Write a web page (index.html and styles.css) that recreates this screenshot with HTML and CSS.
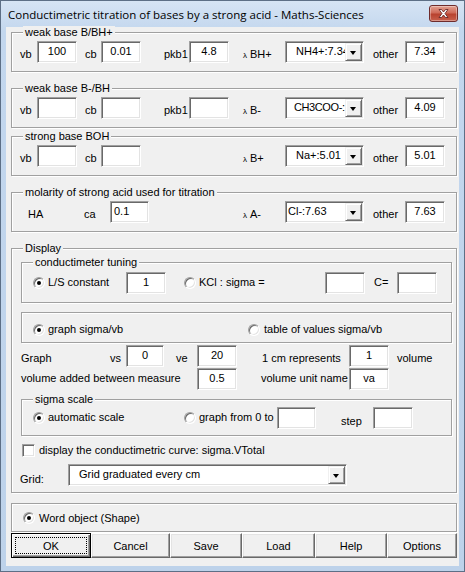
FILE: index.html
```html
<!DOCTYPE html>
<html>
<head>
<meta charset="utf-8">
<title>Conductimetric titration</title>
<link rel="stylesheet" href="styles.css">
</head>
<body>
<div class="window">
  <div class="titlebar">
    <span class="title">Conductimetric titration of bases by a strong acid - Maths-Sciences</span>
    <span class="close"><svg width="29" height="17" viewBox="0 0 29 17"><path d="M10 4.5 L12.5 4.5 L14.5 7 L16.5 4.5 L19 4.5 L16 8.5 L19 12.5 L16.5 12.5 L14.5 10 L12.5 12.5 L10 12.5 L13 8.5 Z" fill="#fff" stroke="#5a1a1a" stroke-width="0.8"/></svg></span>
  </div>
  <div class="client">

    <div class="group g1">
      <span class="legend">weak base B/BH+</span>
      <div class="row">
        <span class="lbl l-vb">vb</span><span class="edit">100</span>
        <span class="lbl l-cb">cb</span><span class="edit">0.01</span>
        <span class="lbl l-pkb">pkb1</span><span class="edit">4.8</span>
        <span class="lbl l-lam"><span class="lam">λ</span>BH+</span>
        <span class="combo"><span class="ctext">NH4+:7.34</span><span class="cbtn"></span></span>
        <span class="lbl l-other">other</span><span class="edit">7.34</span>
      </div>
    </div>

    <div class="group g2">
      <span class="legend">weak base B-/BH</span>
      <div class="row">
        <span class="lbl l-vb">vb</span><span class="edit"></span>
        <span class="lbl l-cb">cb</span><span class="edit"></span>
        <span class="lbl l-pkb">pkb1</span><span class="edit"></span>
        <span class="lbl l-lam"><span class="lam">λ</span>B-</span>
        <span class="combo"><span class="ctext narrow">CH3COO-:</span><span class="cbtn"></span></span>
        <span class="lbl l-other">other</span><span class="edit">4.09</span>
      </div>
    </div>

    <div class="group g3">
      <span class="legend">strong base BOH</span>
      <div class="row">
        <span class="lbl l-vb">vb</span><span class="edit"></span>
        <span class="lbl l-cb">cb</span><span class="edit"></span>
        <span class="lbl l-lam2"><span class="lam">λ</span>B+</span>
        <span class="combo"><span class="ctext">Na+:5.01</span><span class="cbtn"></span></span>
        <span class="lbl l-other">other</span><span class="edit">5.01</span>
      </div>
    </div>

    <div class="group g4">
      <span class="legend">molarity of strong acid used for titration</span>
      <div class="row">
        <span class="lbl l-ha">HA</span><span class="lbl l-ca">ca</span><span class="edit e-ca">0.1</span>
        <span class="lbl l-lam3"><span class="lam">λ</span>A-</span>
        <span class="combo"><span class="ctext c-cl">Cl-:7.63</span><span class="cbtn"></span></span>
        <span class="lbl l-other">other</span><span class="edit">7.63</span>
      </div>
    </div>

    <div class="group display">
      <span class="legend">Display</span>

      <div class="group sub tuning">
        <span class="legend">conductimeter tuning</span>
        <div class="row">
          <span class="radio on r-first"></span><span class="lbl l-ls">L/S constant</span><span class="edit">1</span>
          <span class="radio r-kcl"></span><span class="lbl l-kcl">KCl : sigma =</span><span class="edit"></span>
          <span class="lbl l-c">C=</span><span class="edit"></span>
        </div>
      </div>

      <div class="group sub mode">
        <div class="row">
          <span class="radio on r-first"></span><span class="lbl l-graph">graph sigma/vb</span>
          <span class="radio"></span><span class="lbl l-table">table of values sigma/vb</span>
        </div>
      </div>

      <div class="row line1">
        <span class="lbl l-graphw">Graph</span><span class="lbl l-vs">vs</span><span class="edit e-vs">0</span>
        <span class="lbl l-ve">ve</span><span class="edit e-20">20</span>
        <span class="lbl l-cm">1 cm represents</span><span class="edit e-1">1</span>
        <span class="lbl l-vol">volume</span>
      </div>
      <div class="row line2">
        <span class="lbl l-added">volume added between measure</span><span class="edit e-05">0.5</span>
        <span class="lbl l-unit">volume unit name</span><span class="edit e-va">va</span>
      </div>

      <div class="group sub scale">
        <span class="legend">sigma scale</span>
        <div class="row">
          <span class="radio on r-first"></span><span class="lbl l-auto">automatic scale</span>
          <span class="radio"></span><span class="lbl l-from">graph from 0 to</span><span class="edit e-from"></span>
          <span class="lbl l-step">step</span><span class="edit"></span>
        </div>
      </div>

      <div class="check-row">
        <span class="check"></span><span class="lbl">display the conductimetric curve: sigma.VTotal</span>
      </div>

      <div class="row grid-row">
        <span class="lbl l-grid">Grid:</span>
        <span class="combo wide"><span class="ctext">Grid graduated every cm</span><span class="cbtn"></span></span>
      </div>
    </div>

    <div class="group word">
      <div class="row">
        <span class="radio on"></span><span class="lbl l-word">Word object (Shape)</span>
      </div>
    </div>

    <div class="buttons">
      <span class="btn default"><span class="focus">OK</span></span>
      <span class="btn b-cancel">Cancel</span>
      <span class="btn b-save">Save</span>
      <span class="btn b-load">Load</span>
      <span class="btn b-help">Help</span>
      <span class="btn b-options">Options</span>
    </div>
  </div>
</div>
</body>
</html>
```

FILE: styles.css
```css
* { box-sizing: border-box; }
html, body { margin: 0; padding: 0; }
body {
  width: 465px; height: 572px; overflow: hidden;
  font-family: "Liberation Sans", Arial, sans-serif;
  font-size: 11px; color: #000; background: #fff;
}
.window {
  width: 465px; height: 572px;
  border: 1px solid #5d6f86;
  background: linear-gradient(#d6e4f4, #c3d7ee 30px, #bdd2ea);
  display: flex; flex-direction: column;
}
.titlebar {
  height: 26px; flex: none;
  display: flex; align-items: flex-start; justify-content: space-between;
}
.title {
  font-family: "Open Sans", "Liberation Sans", sans-serif;
  font-size: 11.5px; line-height: 16px;
  margin: 6px 0 0 7px;
  color: #000;
}
.close {
  width: 29px; height: 17px; margin: 4px 6px 0 0;
  border: 1px solid #6e2c2c; border-radius: 3px;
  background: linear-gradient(#e2a293, #cf6a58 45%, #b8422f 55%, #c8604c);
  box-shadow: inset 0 0 0 1px rgba(255,255,255,0.35);
  display: flex;
}
.close svg { display: block; margin: -1px; }
.client {
  flex: 1; margin: 0 5px 5px 5px;
  background: #f0f0f0;
  padding: 5px 0 0 5px;
  display: flex; flex-direction: column;
}

/* group boxes */
.group {
  position: relative;
  width: 446px;
  border: 1px solid #a0a0a0;
  box-shadow: inset 1px 1px #fff, 1px 1px #fff;
  padding: 8px 0 8px 0;
}
.legend {
  position: absolute; top: -7px; left: 11px;
  padding: 0 2px; line-height: 13px;
  background: #f0f0f0;
}
.g2, .g4, .display { margin-top: 16px; }
.g3 { margin-top: 8px; }

.row { display: flex; align-items: flex-start; }
.lbl { display: block; line-height: 13px; padding-top: 7px; white-space: nowrap; flex: none; }

.edit {
  display: block; flex: none;
  width: 40px; height: 22px;
  background: #fff;
  border: 1px solid; border-color: #a0a0a0 #fff #fff #a0a0a0;
  box-shadow: inset 1px 1px #696969, inset -1px -1px #e3e3e3;
  text-align: center; line-height: 13px; padding-top: 3px;
}
.combo {
  display: flex; flex: none; position: relative;
  width: 79px; height: 22px; overflow: hidden;
  background: #fff;
  border: 1px solid; border-color: #a0a0a0 #fff #fff #a0a0a0;
  box-shadow: inset 1px 1px #696969, inset -1px -1px #e3e3e3;
}
.ctext { display: block; line-height: 13px; padding: 3px 0 0 10px; white-space: nowrap; }
.ctext.narrow { padding-left: 8px; letter-spacing: -0.4px; }
.ctext.c-cl { padding-left: 2px; }
.cbtn {
  position: absolute; right: 1px; top: 1px;
  width: 17px; height: 18px;
  background: #f0f0f0;
  border: 1px solid; border-color: #f0f0f0 #696969 #696969 #f0f0f0;
  box-shadow: inset 1px 1px #fff, inset -1px -1px #a0a0a0;
}
.cbtn::after {
  content: ""; position: absolute; left: 4px; top: 7px;
  border-left: 3.5px solid transparent; border-right: 3.5px solid transparent;
  border-top: 4px solid #000;
}
.lam { font-size: 8px; margin-right: 3px; }

/* G1..G3 columns */
.l-vb { width: 25px; padding-left: 8px; }
.l-cb { width: 24px; padding-left: 8px; }
.l-pkb { width: 48px; padding-left: 23px; }
.l-lam { width: 56px; padding-left: 14px; }
.l-lam2 { width: 144px; padding-left: 102px; }
.l-other { width: 41px; padding-left: 9px; }
.l-ha { width: 72px; padding-left: 16px; }
.l-ca { width: 26px; }
.e-ca { width: 39px; text-align: left; padding-left: 3px; }
.l-lam3 { width: 136px; padding-left: 94px; }

/* display group */
.display { padding: 13px 4px 6px 9px; }
.sub { width: 431px; }
.tuning { padding: 9px 0 8px 0; }
.mode { margin-top: 9px; padding: 10px 0 6px 0; }
.radio {
  display: block; flex: none; position: relative;
  width: 12px; height: 12px; margin-top: 1px;
  border-radius: 50%;
  background: #fff;
  border: 1px solid; border-color: #a0a0a0 #fff #fff #a0a0a0;
  box-shadow: inset 1px 1px #696969, inset -1px -1px #e3e3e3;
}
.radio.on::after {
  content: ""; position: absolute; left: 3px; top: 3px;
  width: 4px; height: 4px; border-radius: 50%; background: #000;
}
.tuning .radio, .scale .radio { margin-top: 5px; }
.tuning .lbl, .scale .lbl { padding-top: 4px; }
.mode .lbl, .word .lbl { padding-top: 0; }
.r-first { margin-left: 11px; }
.l-ls { width: 81px; padding-left: 3px; }
.r-kcl { margin-left: 18px; }
.l-kcl { width: 129px; padding-left: 3px; }
.l-c { width: 32px; padding-left: 9px; }

.l-graph { width: 203px; padding-left: 3px; }
.l-table { padding-left: 4px; }

.line1 { margin-top: 2px; }
.line2 { margin-top: 1px; }
.l-graphw { width: 89px; }
.l-vs { width: 16px; }
.e-vs { width: 38px; }
.l-ve { width: 33px; padding-left: 12px; }
.l-cm { width: 112px; padding-left: 25px; }
.l-vol { padding-left: 8px; }
.l-added { width: 176px; padding-top: 4px; }
.l-unit { width: 112px; padding-left: 24px; padding-top: 4px; }

.scale { margin-top: 9px; padding: 7px 0 6px 0; }
.l-auto { width: 139px; padding-left: 3px; }
.l-from { width: 81px; padding-left: 3px; }
.e-from { width: 39px; }
.l-step { width: 57px; padding-left: 25px; padding-top: 8px !important; }

.check-row { display: flex; align-items: center; margin-top: 8px; margin-left: 1px; height: 13px; }
.check {
  display: block; flex: none; width: 13px; height: 13px;
  background: #fff;
  border: 1px solid; border-color: #a0a0a0 #fff #fff #a0a0a0;
  box-shadow: inset 1px 1px #696969, inset -1px -1px #e3e3e3;
}
.check-row .lbl { padding: 0 0 0 4px; }

.grid-row { margin-top: 7px; }
.l-grid { width: 48px; padding-left: 0; padding-top: 9px; margin-left: -1px; }
.combo.wide { width: 279px; }
.combo.wide .ctext { padding-left: 10px; }

.word { margin-top: 10px; padding: 8px 0 6px 0; }
.word .radio { margin: 0 0 0 11px; }
.l-word { padding-left: 4px; }

/* buttons */
.buttons { display: flex; margin-top: 1px; width: 446px; height: 25px; }
.btn {
  display: flex; align-items: center; justify-content: center;
  height: 25px; flex: none;
  background: #f0f0f0;
  border: 1px solid; border-color: #fff #696969 #696969 #fff;
  box-shadow: inset -1px -1px #a0a0a0, inset 1px 1px #e3e3e3;
}
.btn.default {
  width: 80px; border: 1px solid #000;
  box-shadow: inset 1px 1px #fff, inset -1px -1px #696969, inset -2px -2px #a0a0a0;
  padding: 3px;
}
.focus {
  flex: 1; align-self: stretch;
  display: flex; align-items: center; justify-content: center;
  border: 1px dotted #000;
}
.b-cancel { width: 79px; }
.b-save { width: 72px; }
.b-load { width: 73px; }
.b-help { width: 72px; }
.b-options { width: 70px; }
```
